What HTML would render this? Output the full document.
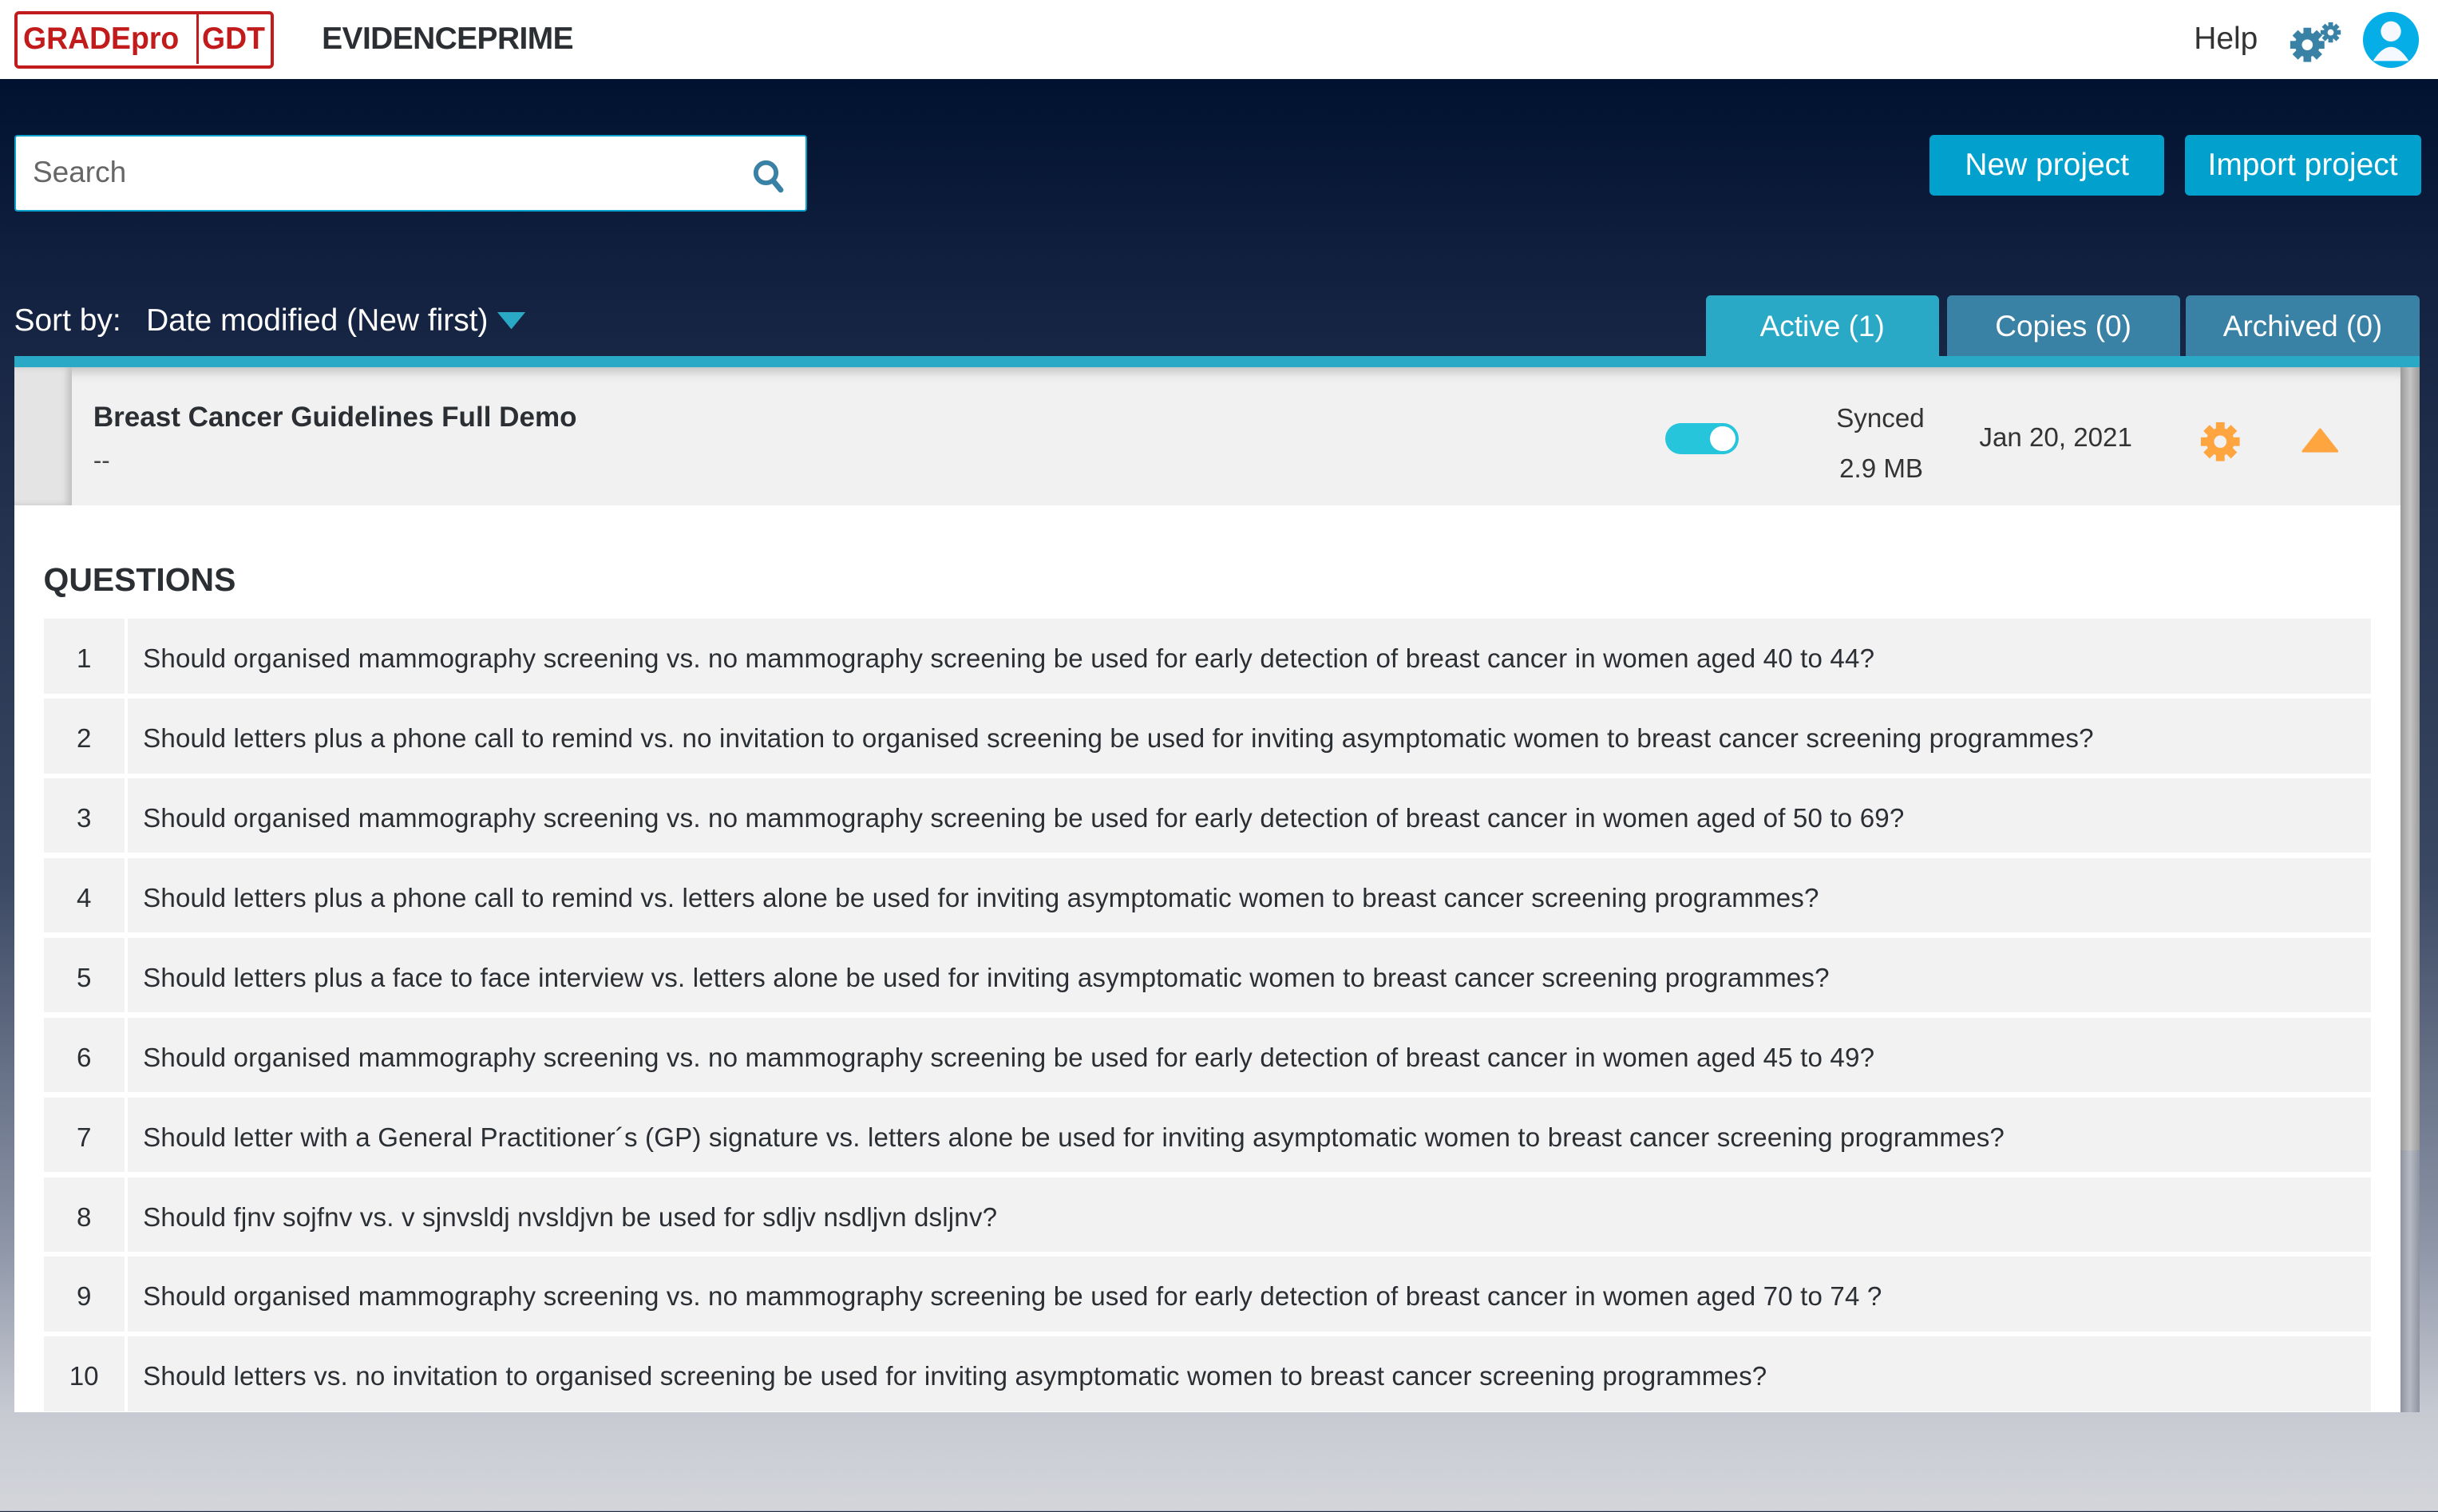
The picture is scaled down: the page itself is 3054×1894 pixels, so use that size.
<!DOCTYPE html>
<html><head><meta charset="utf-8">
<style>
html{zoom:1.9477}
*{box-sizing:border-box;margin:0;padding:0}
body{width:1568px;height:972px;overflow:hidden;font-family:"Liberation Sans",sans-serif;position:relative;
background:linear-gradient(180deg,#001230 51px,#1c2a48 260px,#3a4762 560px,#8d95a7 800px,#c7cad2 908px,#d3d5da 972px);}
.hdr{position:absolute;left:0;top:0;width:1568px;height:51px;background:#fff}
.logo{position:absolute;left:9px;top:7px;width:167px;height:37px;border:2.5px solid #c11b1b;border-radius:3px;color:#c11b1b;font-weight:bold;font-size:20px;line-height:32px;}
.logo span{position:absolute;top:0;transform:scaleX(0.96);transform-origin:left}
.logo .div{position:absolute;left:115px;top:0;width:2px;height:32px;background:#c11b1b}
.ep{position:absolute;left:207px;top:14px;font-size:20px;font-weight:bold;color:#2b2f33;letter-spacing:-0.3px}
.help{position:absolute;left:1411px;top:14px;font-size:20px;color:#333}
.search{position:absolute;left:9px;top:87px;width:510px;height:49px;background:#fff;border:1.5px solid #0aa0cc;border-radius:2px}
.search span{position:absolute;left:11px;top:12px;font-size:19px;color:#666}
.btn{position:absolute;top:87px;height:39px;background:#02a0cc;border-radius:3px;color:#fff;font-size:20px;text-align:center;line-height:39px}
.sort{position:absolute;top:195px;color:#fff;font-size:20px}
.tab{position:absolute;top:190px;height:40px;width:150px;border-radius:3px 3px 0 0;background:#3a82a5;color:#fff;font-size:19px;text-align:center;line-height:40px}
.bar{position:absolute;left:9px;top:229px;width:1547px;height:7px;background:#2aa9c6}
.panel{position:absolute;left:9px;top:236px;width:1535px;height:672px;background:#fff;overflow:hidden}
.proj{position:absolute;left:0;top:0;width:1535px;height:89px;background:#f1f1f1;box-shadow:inset 0 8px 8px -6px rgba(0,0,0,.25)}
.proj .lc{position:absolute;left:0;top:0;width:37px;height:89px;background:#e4e4e4;box-shadow:inset -3px 0 4px rgba(0,0,0,.15)}
.scroll{position:absolute;left:1544px;top:236px;width:12px;height:672px;background:linear-gradient(90deg,#8e93a0,#b6bac3,#8e93a0)}
.thumb{position:absolute;left:1544px;top:236px;width:12px;height:504px;background:linear-gradient(90deg,#9a9a9a,#c4c4c4,#9a9a9a)}
.q{position:absolute;left:19px;top:162px;width:1497px}
.row{height:48px;margin-bottom:3.3px;display:flex;font-size:17px;color:#2b2f33}
.row .n{width:52px;background:#f2f2f2;margin-right:2px;text-align:center;line-height:52px}
.row .t{flex:1;background:#f2f2f2;padding-left:10px;line-height:52px;white-space:nowrap;letter-spacing:0.08px}
</style></head><body>
<div class="hdr">
 <div class="logo"><span style="left:4px">GRADEpro</span><div class="div"></div><span style="left:119px">GDT</span></div>
 <div class="ep">EVIDENCEPRIME</div>
 <div class="help">Help</div>
 <svg style="position:absolute;left:1471px;top:13px" width="36" height="28" viewBox="0 0 36 28">
  <g fill="#3a82a5">
   <circle cx="13" cy="16" r="8"/>
   <g transform="translate(13 16)">
    <rect x="-2.5" y="-11" width="5" height="22"/><rect x="-2.5" y="-11" width="5" height="22" transform="rotate(45)"/>
    <rect x="-2.5" y="-11" width="5" height="22" transform="rotate(90)"/><rect x="-2.5" y="-11" width="5" height="22" transform="rotate(135)"/>
   </g>
   <circle cx="28" cy="8" r="4.5"/>
   <g transform="translate(28 8)">
    <rect x="-1.5" y="-6.5" width="3" height="13"/><rect x="-1.5" y="-6.5" width="3" height="13" transform="rotate(45)"/>
    <rect x="-1.5" y="-6.5" width="3" height="13" transform="rotate(90)"/><rect x="-1.5" y="-6.5" width="3" height="13" transform="rotate(135)"/>
   </g>
  </g>
  <circle cx="13" cy="16" r="3.5" fill="#fff"/><circle cx="28" cy="8" r="2" fill="#fff"/>
 </svg>
 <svg style="position:absolute;left:1519px;top:7px" width="37" height="37" viewBox="0 0 37 37">
  <circle cx="18.5" cy="18.5" r="18" fill="#05aee6"/>
  <circle cx="18.5" cy="13" r="6.5" fill="#f5f8ff"/>
  <path d="M7 32 Q18.5 14 30 32 Z" fill="#f5f8ff"/>
 </svg>
</div>
<div class="search"><span>Search</span>
 <svg style="position:absolute;left:473px;top:13px" width="22" height="24" viewBox="0 0 22 24"><circle cx="9.5" cy="10" r="6.5" fill="none" stroke="#3a82a5" stroke-width="3"/><path d="M14 15 L19 21" stroke="#3a82a5" stroke-width="3.5" stroke-linecap="round"/></svg>
</div>
<div class="btn" style="left:1241px;width:151px">New project</div>
<div class="btn" style="left:1405px;width:152px">Import project</div>
<div class="sort" style="left:9px">Sort by:</div>
<div class="sort" style="left:94px">Date modified (New first)</div>
<svg style="position:absolute;left:320px;top:201px" width="18" height="12"><path d="M0 0 H18 L9 11 Z" fill="#2aa9c6"/></svg>
<div class="tab" style="left:1097px;background:#2aa9c6">Active (1)</div>
<div class="tab" style="left:1252px">Copies (0)</div>
<div class="tab" style="left:1406px">Archived (0)</div>
<div class="bar"></div>
<div class="scroll"></div><div class="thumb"></div>
<div class="panel">
 <div class="proj"><div class="lc"></div>
  <div style="position:absolute;left:51px;top:22px;font-size:18px;font-weight:bold;color:#2b2f33">Breast Cancer Guidelines Full Demo</div>
  <div style="position:absolute;left:51px;top:51px;font-size:16px;color:#444">--</div>
  <div style="position:absolute;left:1062px;top:36px;width:47px;height:20px;border-radius:10px;background:#27c5dc"></div>
  <div style="position:absolute;left:1091px;top:38px;width:16px;height:16px;border-radius:8px;background:#fff"></div>
  <div style="position:absolute;left:1172px;top:24px;font-size:17px;color:#333">Synced</div>
  <div style="position:absolute;left:1174px;top:56px;font-size:17px;color:#333">2.9 MB</div>
  <div style="position:absolute;left:1264px;top:36px;font-size:17px;color:#333">Jan 20, 2021</div>
  <svg style="position:absolute;left:1405px;top:34px" width="28" height="28" viewBox="0 0 28 28">
   <g fill="#ffa540" transform="translate(14 14)">
    <circle r="9"/>
    <rect x="-2.8" y="-12.5" width="5.6" height="25"/><rect x="-2.8" y="-12.5" width="5.6" height="25" transform="rotate(45)"/>
    <rect x="-2.8" y="-12.5" width="5.6" height="25" transform="rotate(90)"/><rect x="-2.8" y="-12.5" width="5.6" height="25" transform="rotate(135)"/>
   </g><circle cx="14" cy="14" r="4" fill="#f1f1f1"/>
  </svg>
  <svg style="position:absolute;left:1471px;top:39px" width="24" height="16"><path d="M1 15 L12 1 L23 15 Z" fill="#ffa540" stroke="#ffa540" stroke-linejoin="round" stroke-width="1.5"/></svg>
 </div>
 <div style="position:absolute;left:19px;top:125px;font-size:21px;font-weight:bold;color:#2b2f33">QUESTIONS</div>
 <div class="q">
  <div class="row"><div class="n">1</div><div class="t">Should organised mammography screening vs. no mammography screening be used for early detection of breast cancer in women aged 40 to 44?</div></div>
  <div class="row"><div class="n">2</div><div class="t">Should letters plus a phone call to remind vs. no invitation to organised screening be used for inviting asymptomatic women to breast cancer screening programmes?</div></div>
  <div class="row"><div class="n">3</div><div class="t">Should organised mammography screening vs. no mammography screening be used for early detection of breast cancer in women aged of 50 to 69?</div></div>
  <div class="row"><div class="n">4</div><div class="t">Should letters plus a phone call to remind vs. letters alone be used for inviting asymptomatic women to breast cancer screening programmes?</div></div>
  <div class="row"><div class="n">5</div><div class="t">Should letters plus a face to face interview vs. letters alone be used for inviting asymptomatic women to breast cancer screening programmes?</div></div>
  <div class="row"><div class="n">6</div><div class="t">Should organised mammography screening vs. no mammography screening be used for early detection of breast cancer in women aged 45 to 49?</div></div>
  <div class="row"><div class="n">7</div><div class="t">Should letter with a General Practitioner´s (GP) signature vs. letters alone be used for inviting asymptomatic women to breast cancer screening programmes?</div></div>
  <div class="row"><div class="n">8</div><div class="t">Should fjnv sojfnv vs. v sjnvsldj nvsldjvn be used for sdljv nsdljvn dsljnv?</div></div>
  <div class="row"><div class="n">9</div><div class="t">Should organised mammography screening vs. no mammography screening be used for early detection of breast cancer in women aged 70 to 74 ?</div></div>
  <div class="row"><div class="n">10</div><div class="t">Should letters vs. no invitation to organised screening be used for inviting asymptomatic women to breast cancer screening programmes?</div></div>
 </div>
</div>
</body></html>
